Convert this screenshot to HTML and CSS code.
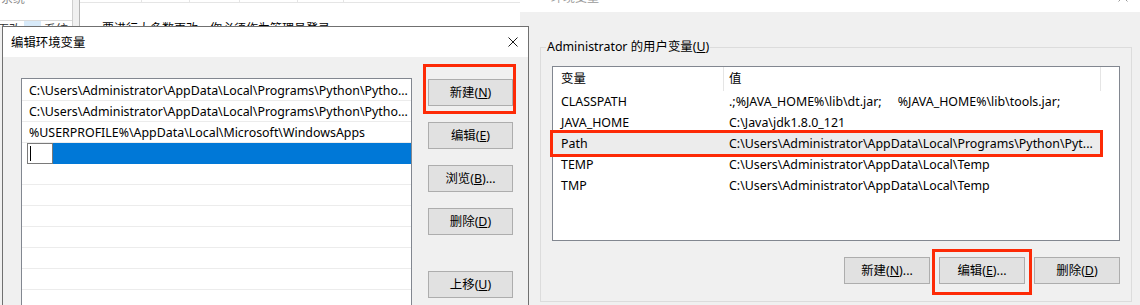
FILE: index.html
```html
<!DOCTYPE html>
<html>
<head>
    <meta charset="utf-8">
    <title>编辑环境变量</title>
    <link rel="stylesheet" href="styles.css">
</head>
<body>
<div class="desk">

    <!-- 后面的系统窗口 -->
    <div class="bg-side">
        <div class="side-title">系统</div>
        <div class="side-tabs">
            <span class="tab">更改</span>
            <span class="tab tab-on"></span>
            <span class="tab">系统</span>
        </div>
    </div>
    <div class="bg-strip"></div>
    <div class="bg-window">
        <div class="bg-header">
            <span style="width: 62px"></span>
            <span style="width: 48px"></span>
            <span style="width: 50px"></span>
            <span style="width: 58px"></span>
            <span style="width: 46px"></span>
        </div>
        <p class="bg-note">要进行大多数更改，你必须作为管理员登录</p>
    </div>

    <!-- 环境变量 -->
    <div class="dlg env">
        <div class="titlebar">
            <span class="title">环境变量</span>
            <svg class="close" width="10" height="10" viewBox="0 0 10 10">
                <path d="M0.5 0.5 L9.5 9.5 M9.5 0.5 L0.5 9.5" stroke="#9a9a9a" stroke-width="1" fill="none"/>
            </svg>
        </div>
        <div class="body">
            <fieldset class="group">
                <legend>Administrator 的用户变量(<u>U</u>)</legend>
                <div class="listview">
                    <div class="lv-head">
                        <div>变量</div>
                        <div>值</div>
                    </div>
                    <div class="lv-row">
                        <div>CLASSPATH</div>
                        <div>.;%JAVA_HOME%\lib\dt.jar;     %JAVA_HOME%\lib\tools.jar;</div>
                    </div>
                    <div class="lv-row">
                        <div>JAVA_HOME</div>
                        <div>C:\Java\jdk1.8.0_121</div>
                    </div>
                    <div class="lv-row lv-hot mark mark-path">
                        <div>Path</div>
                        <div>C:\Users\Administrator\AppData\Local\Programs\Python\Pyt...</div>
                    </div>
                    <div class="lv-row">
                        <div>TEMP</div>
                        <div>C:\Users\Administrator\AppData\Local\Temp</div>
                    </div>
                    <div class="lv-row">
                        <div>TMP</div>
                        <div>C:\Users\Administrator\AppData\Local\Temp</div>
                    </div>
                </div>
                <div class="btn-row">
                    <button class="btn wide">新建(<u>N</u>)...</button>
                    <button class="btn wide mark mark-edit">编辑(<u>E</u>)...</button>
                    <button class="btn wide">删除(<u>D</u>)</button>
                </div>
            </fieldset>
        </div>
    </div>

    <!-- 编辑环境变量 -->
    <div class="dlg edit">
        <div class="titlebar">
            <span class="title">编辑环境变量</span>
            <svg class="close" width="10" height="10" viewBox="0 0 10 10">
                <path d="M0.5 0.5 L9.5 9.5 M9.5 0.5 L0.5 9.5" stroke="#1a1a1a" stroke-width="1" fill="none"/>
            </svg>
        </div>
        <div class="body">
            <ul class="paths">
                <li>C:\Users\Administrator\AppData\Local\Programs\Python\Pytho...</li>
                <li>C:\Users\Administrator\AppData\Local\Programs\Python\Pytho...</li>
                <li>%USERPROFILE%\AppData\Local\Microsoft\WindowsApps</li>
                <li class="editing">
                    <span class="edit-box"><i class="caret"></i></span>
                    <span class="sel"></span>
                </li>
                <li></li>
                <li></li>
                <li></li>
                <li></li>
                <li></li>
                <li></li>
                <li></li>
            </ul>
            <div class="side-btns">
                <button class="btn mark mark-new">新建(<u>N</u>)</button>
                <button class="btn">编辑(<u>E</u>)</button>
                <button class="btn">浏览(<u>B</u>)...</button>
                <button class="btn">删除(<u>D</u>)</button>
                <button class="btn btn-far">上移(<u>U</u>)</button>
            </div>
        </div>
    </div>

</div>
</body>
</html>
```
FILE: styles.css
```css
* {
    box-sizing: border-box;
}

body {
    margin: 0;
    font-family: "Noto Sans", "Noto Sans CJK SC", sans-serif;
    font-size: 12.4px;
    color: #000;
}

.desk {
    position: relative;
    width: 1140px;
    height: 305px;
    overflow: hidden;
    background: #f0f0f0;
}

/* ---- 背景窗口 ---- */

.bg-side {
    position: absolute;
    left: 0;
    top: 0;
    width: 72px;
    height: 26px;
    background: #fff;
    overflow: hidden;
}

.side-title {
    margin-top: -9px;
    padding-left: 1px;
    height: 29px;
    line-height: 16px;
    font-size: 12px;
    color: #8a8a8a;
}

.side-tabs {
    display: flex;
    border-top: 1px solid #dadada;
    height: 20px;
}

.tab {
    font-size: 12px;
    line-height: 16px;
    padding: 1px 3px 0;
    color: #333;
}

.tab:first-child {
    margin-left: -6px;
}

.tab-on {
    width: 17px;
    background: #d8eaf9;
}

.bg-strip {
    position: absolute;
    left: 72px;
    top: 0;
    width: 8px;
    height: 26px;
    background: #f0f0f0;
    border-left: 1px solid #cfcfcf;
    border-right: 1px solid #b5b5b5;
}

.bg-window {
    position: absolute;
    left: 80px;
    top: 0;
    width: 449px;
    height: 26px;
    background: #fff;
    border-right: 1px solid #8c8c8c;
    overflow: hidden;
}

.bg-header {
    display: flex;
    height: 3px;
    border-bottom: 1px solid #e5e5e5;
}

.bg-header span {
    border-right: 1px solid #e5e5e5;
}

.bg-note {
    margin: 18px 0 0 22px;
    font-size: 12px;
    line-height: 16px;
}

/* ---- 对话框 ---- */

.dlg {
    position: absolute;
    display: flex;
    flex-direction: column;
}

.titlebar {
    display: flex;
    align-items: center;
    justify-content: space-between;
    height: 30px;
    background: #fff;
    flex-shrink: 0;
}

.body {
    flex: 1;
    background: #f0f0f0;
}

.env {
    left: 520px;
    top: -18px;
    width: 620px;
    height: 330px;
}

.env .titlebar {
    padding: 0 12px 0 31px;
}

.env .title {
    font-size: 12px;
    color: #9a9a9a;
}

.env .body {
    padding: 26px 0 0 20px;
}

.group {
    width: 592px;
    margin: 0;
    padding: 10px 11px 17px;
    border: 1px solid #dcdcdc;
    min-width: 0;
}

.group legend {
    margin-left: -6px;
    padding: 0 1px;
    line-height: 18px;
}

.listview {
    width: 568px;
    height: 175px;
    border: 1px solid #828790;
    background: #fff;
}

.lv-head,
.lv-row {
    display: grid;
    grid-template-columns: 171px 377px;
    width: 548px;
}

.lv-head {
    height: 24px;
    line-height: 23px;
}

.lv-head div {
    border-right: 1px solid #e5e5e5;
    padding-left: 8px;
}

.lv-head div + div {
    padding-left: 5px;
}

.lv-row {
    height: 21px;
    line-height: 21px;
    white-space: pre;
}

.lv-row div {
    padding-left: 8px;
    overflow: hidden;
}

.lv-row div + div {
    padding-left: 5px;
}

.lv-hot {
    background: #ececec;
}

.btn-row {
    display: flex;
    justify-content: flex-end;
    gap: 9px;
    margin-top: 16px;
}

.btn {
    width: 85px;
    height: 27px;
    padding: 0;
    font: inherit;
    line-height: 25px;
    color: #000;
    background: #e1e1e1;
    border: 1px solid #adadad;
    border-radius: 0;
}

.btn.wide {
    width: 86px;
}

.btn u {
    text-underline-offset: 1px;
}

/* 编辑环境变量 */

.edit {
    left: 2px;
    top: 26px;
    width: 527px;
    height: 300px;
    border: 1px solid #707070;
    border-bottom: 0;
}

.edit .titlebar {
    padding: 0 10px 0 8px;
}

.edit .body {
    display: flex;
    align-items: flex-start;
    padding: 21px 0 0 18px;
}

.paths {
    width: 391px;
    height: 240px;
    margin: 0;
    padding: 1px 0 0;
    list-style: none;
    background: #fff;
    border: 1px solid #828790;
    overflow: hidden;
}

.paths li {
    height: 21px;
    line-height: 22px;
    padding-left: 7px;
    border-bottom: 1px solid #ececec;
    white-space: nowrap;
    overflow: hidden;
}

.paths li.editing {
    display: flex;
    padding-left: 5px;
    border-bottom: 0;
}

.edit-box {
    position: relative;
    width: 26px;
    height: 21px;
    background: #fff;
    border: 1px solid #7a7a7a;
}

.caret {
    position: absolute;
    left: 2px;
    top: 2px;
    width: 1px;
    height: 15px;
    background: #000;
}

.sel {
    flex: 1;
    background: #0078d7;
}

.side-btns {
    display: flex;
    flex-direction: column;
    gap: 16px;
    margin: 1px 0 0 16px;
}

.btn-far {
    margin-top: 20px;
}

/* 红框标注 */

.mark {
    position: relative;
}

.mark::after {
    content: '';
    position: absolute;
    border: 3px solid #fd2a06;
}

.mark-new::after {
    top: -16px;
    left: -6px;
    right: -4px;
    bottom: -9px;
}

.mark-edit::after {
    top: -9px;
    left: -8px;
    right: -8px;
    bottom: -12px;
}

.mark-path::after {
    top: -3px;
    left: -3px;
    right: -2px;
    bottom: -3px;
}
```
